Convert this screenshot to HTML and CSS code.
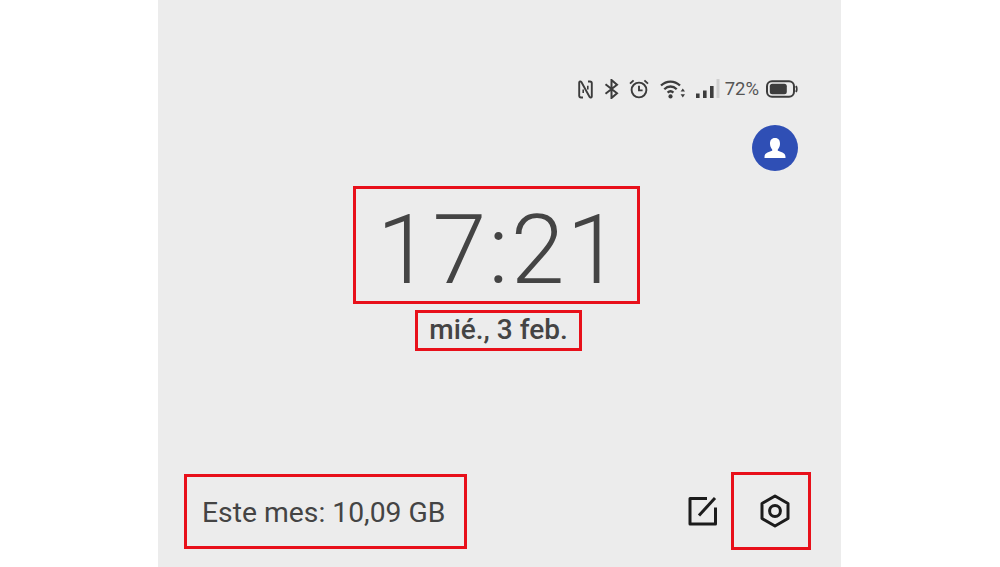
FILE: index.html
```html
<!DOCTYPE html>
<html lang="es">
<head>
    <meta charset="UTF-8">
    <meta name="viewport" content="width=device-width, initial-scale=1.0">
    <title>Panel de notificaciones</title>
    <link rel="stylesheet" href="styles.css">
</head>
<body>
    <div class="phone">
        <div class="status-bar">
            <!-- nfc -->
            <svg class="icon-nfc" width="15" height="19" viewBox="0 0 15 19" fill="none" stroke="#3c3c3c" stroke-width="1.9">
                <path d="M5 17.5 H3 C1.8 17.5 1.2 16.8 1.2 15.8 V2.6 C1.2 1.4 2.6 1 3.4 2 L11.6 17 C12.4 18 13.8 17.6 13.8 16.4 V3.2 C13.8 2.2 13.2 1.5 12 1.5 H10"/>
                <path d="M5.2 9.5 V13 M9.8 5.8 V9.5" stroke-width="1.6"/>
            </svg>
            <!-- bluetooth -->
            <svg class="icon-bt" width="15" height="20" viewBox="0 0 15 20" fill="none" stroke="#3c3c3c" stroke-width="2">
                <path d="M1.5 5.2 L13 14.2 L7.5 19 V1 L13 5.8 L1.5 14.8"/>
            </svg>
            <!-- alarm -->
            <svg class="icon-alarm" width="20" height="20" viewBox="0 0 20 20" fill="none" stroke="#3c3c3c" stroke-width="1.9">
                <circle cx="10" cy="11" r="7.4"/>
                <path d="M10 6.8 V11.4 H13.6"/>
                <path d="M1 4.6 L4.6 1.4 M19 4.6 L15.4 1.4"/>
            </svg>
            <!-- wifi -->
            <svg class="icon-wifi" width="26" height="20" viewBox="0 0 26 20" fill="none" stroke="#3c3c3c" stroke-width="2.3">
                <path d="M1 6.5 C6.5 1.2 14.5 1.2 20 6.5"/>
                <path d="M4.3 10.2 C8 6.6 13 6.6 16.7 10.2"/>
                <path d="M7.6 13.6 C9.4 11.9 11.6 11.9 13.4 13.6"/>
                <circle cx="10.5" cy="17.4" r="2.1" fill="#3c3c3c" stroke="none"/>
                <path d="M22.8 9.5 L25 12.6 H20.6 Z M22.8 18.6 L25 15.2 H20.6 Z" fill="#3c3c3c" stroke="none"/>
            </svg>
            <!-- signal -->
            <svg class="icon-signal" width="25" height="20" viewBox="0 0 25 20">
                <rect x="0" y="14.5" width="3.6" height="4.5" fill="#3c3c3c"/>
                <rect x="7" y="11.5" width="3.6" height="7.5" fill="#3c3c3c"/>
                <rect x="14" y="7" width="3.6" height="12" fill="#3c3c3c"/>
                <rect x="20.5" y="0" width="3" height="19" fill="#cfcfcf"/>
            </svg>
            <span class="battery-text">72%</span>
            <!-- battery -->
            <svg class="icon-battery" width="32" height="18" viewBox="0 0 32 18" fill="none">
                <rect x="1" y="1.2" width="27" height="15.6" rx="5" stroke="#3c3c3c" stroke-width="2"/>
                <rect x="3.8" y="3.8" width="17" height="10.4" rx="2.5" fill="#3c3c3c"/>
                <path d="M30 6 C31 7.5 31 10.5 30 12" stroke="#3c3c3c" stroke-width="1.8"/>
            </svg>
        </div>

        <div class="avatar-row">
            <div class="avatar">
                <svg width="24" height="24" viewBox="0 0 24 24">
                    <path d="M12 2 C15.6 2 17.2 4.6 17 8 C16.8 10.8 15.8 12.4 14.8 13.4 V14.8 C17 15.8 22.5 16.2 22.5 21 V22 H1.5 V21 C1.5 16.2 7 15.8 9.2 14.8 V13.4 C8.2 12.4 7.2 10.8 7 8 C6.8 4.6 8.4 2 12 2 Z" fill="#ffffff"/>
                </svg>
            </div>
        </div>

        <div class="time-box red-box">17:21</div>
        <div class="date-box red-box">mié., 3 feb.</div>

        <div class="bottom-row">
            <div class="data-box red-box">Este mes: 10,09 GB</div>
            <div class="actions">
                <svg class="icon-edit" width="32" height="32" viewBox="0 0 32 32" fill="none" stroke="#1c1c1c" stroke-width="3" stroke-linejoin="round">
                    <path d="M20 3.5 H3 V29 H28.5 V12.5"/>
                    <path d="M12 20.5 L28 3"/>
                </svg>
                <div class="settings-box red-box">
                    <svg width="32" height="34" viewBox="0 0 32 34" fill="none" stroke="#1c1c1c" stroke-width="3" stroke-linejoin="round">
                        <path d="M16 2 L29 9.5 V24.5 L16 32 L3 24.5 V9.5 Z"/>
                        <circle cx="16" cy="17" r="5.4"/>
                    </svg>
                </div>
            </div>
        </div>
    </div>
</body>
</html>
```

FILE: styles.css
```css
* {
    box-sizing: border-box;
}
body {
    margin: 0;
    background-color: #ffffff;
    font-family: 'Roboto', sans-serif;
    color: #444444;
}
.phone {
    width: 683px;
    height: 567px;
    margin-left: 158px;
    background-color: #ececec;
    display: flex;
    flex-direction: column;
    overflow: hidden;
}
.red-box {
    border: 3px solid #e8101a;
}
.status-bar {
    display: flex;
    align-items: center;
    justify-content: flex-end;
    height: 22px;
    margin-top: 78px;
    padding-right: 43px;
}
.icon-nfc {
    margin-right: 11px;
}
.icon-bt {
    margin-right: 10px;
}
.icon-alarm {
    margin-right: 11px;
}
.icon-wifi {
    margin-right: 10px;
}
.battery-text {
    margin-left: 4px;
    margin-right: 7px;
    font-size: 18.5px;
    color: #555555;
}
.avatar-row {
    display: flex;
    justify-content: flex-end;
    padding-right: 43px;
    margin-top: 25px;
}
.avatar {
    width: 46px;
    height: 46px;
    border-radius: 50%;
    background-color: #2f4fb5;
    display: flex;
    align-items: center;
    justify-content: center;
}
.time-box {
    align-self: flex-start;
    width: 287px;
    height: 118px;
    margin-left: 195px;
    margin-top: 15px;
    padding-top: 5px;
    padding-left: 6px;
    font-size: 97px;
    font-weight: 300;
    line-height: 112px;
    letter-spacing: 2px;
    text-align: center;
}
.date-box {
    align-self: flex-start;
    width: 167px;
    height: 41px;
    margin-left: 257px;
    margin-top: 6px;
    font-size: 28px;
    font-weight: 500;
    line-height: 34px;
    text-align: center;
}
.bottom-row {
    display: flex;
    align-items: center;
    justify-content: space-between;
    margin-top: 121px;
    padding-left: 26px;
    padding-right: 30px;
}
.data-box {
    width: 283px;
    height: 75px;
    padding-left: 15px;
    font-size: 28.3px;
    line-height: 71px;
}
.actions {
    display: flex;
    align-items: center;
    gap: 12px;
}
.settings-box {
    width: 80px;
    height: 78px;
    padding-left: 8px;
    display: flex;
    align-items: center;
    justify-content: center;
}
```
